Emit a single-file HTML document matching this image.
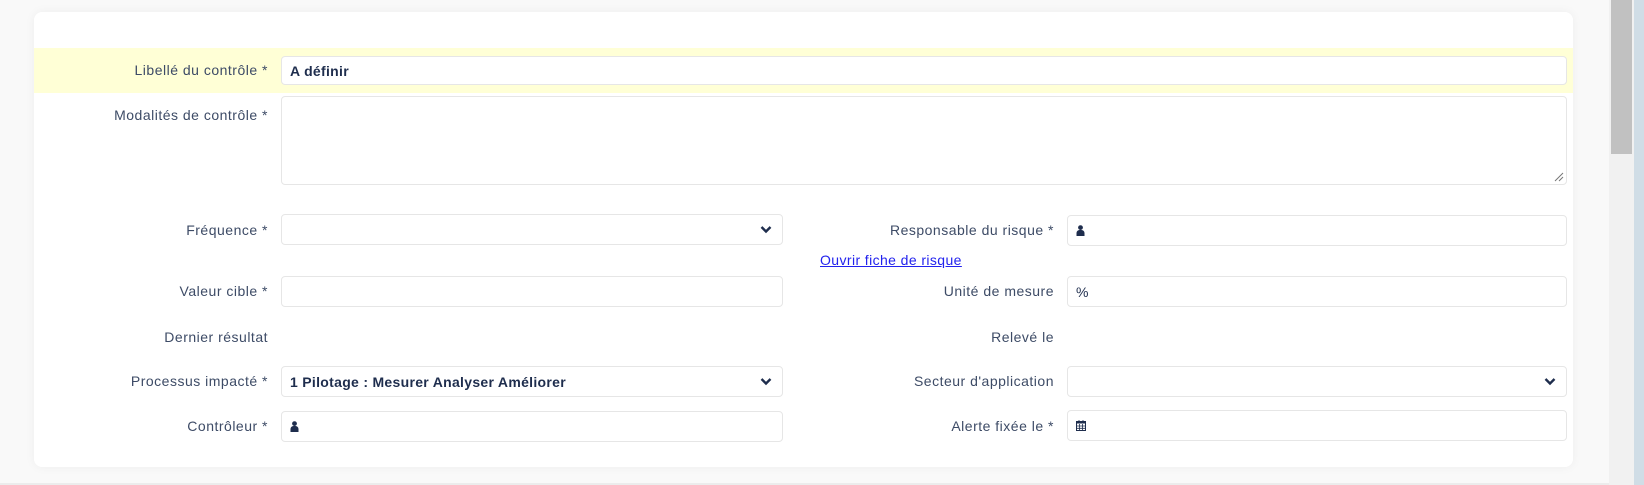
<!DOCTYPE html>
<html><head><meta charset="utf-8"><style>
*{box-sizing:border-box;margin:0;padding:0}
body{width:1644px;height:485px;background:#f9f9f9;font-family:"Liberation Sans",sans-serif;position:relative;overflow:hidden;color:#34435e}
.card{position:absolute;left:34px;top:12px;width:1539px;height:455px;background:#fff;border-radius:8px;box-shadow:0 0 10px rgba(0,0,0,.05)}
.band{position:absolute;left:34px;top:48px;width:1539px;height:45px;background:#ffffd6}
.lab{position:absolute;font-size:14px;text-align:right;color:#3d4b66;letter-spacing:0.5px;white-space:nowrap}
.in{position:absolute;background:#fff;border:1px solid #e6e6e6;border-radius:4px;font-size:14px;font-weight:bold;color:#1e2d4d;padding-left:8px;display:flex;align-items:center;letter-spacing:0.3px;white-space:nowrap}
.chev{position:absolute;right:10px;top:50%;margin-top:-5px}
.sb{position:absolute;left:1609px;top:0;width:25px;height:485px;background:#f1f1f1}
.th{position:absolute;left:1611px;top:0;width:21px;height:154px;background:#c1c1c1}
.blue{position:absolute;left:1634px;top:0;width:10px;height:485px;background:#d0dde6}
</style></head><body>
<div style="position:absolute;left:0;top:483px;width:1609px;height:2px;background:#ececec"></div>
<div class="card"></div>
<div class="band"></div>
<div class="lab" style="right:1376px;top:62px">Libellé du contrôle *</div>
<div class="in" style="left:281px;top:56px;width:1286px;height:29px">A définir</div>
<div class="lab" style="right:1376px;top:107px">Modalités de contrôle *</div>
<div class="in" style="left:281px;top:96px;width:1286px;height:89px">
<svg style="position:absolute;right:2px;bottom:2px" width="10" height="10"><path d="M1 9L9 1M5 9L9 5" stroke="#777" stroke-width="1"/></svg></div>

<div class="lab" style="right:1376px;top:222px">Fréquence *</div>
<div class="in" style="left:281px;top:214px;width:502px;height:31px"><svg class="chev" width="12" height="9"><path d="M1.5 2L6 6.5L10.5 2" stroke="#1e2d4d" stroke-width="2.4" fill="none"/></svg></div>
<div class="lab" style="right:590px;top:222px">Responsable du risque *</div>
<div class="in" style="left:1067px;top:215px;width:500px;height:31px"><svg width="9" height="11" viewBox="0 0 9 11"><circle cx="4.5" cy="2.6" r="2.4" fill="#1e2d4d"/><path d="M0.5 11V8a3 3 0 0 1 3-3h2a3 3 0 0 1 3 3v3z" fill="#1e2d4d"/></svg></div>
<a style="position:absolute;left:820px;top:252px;font-size:14px;letter-spacing:0.4px;text-decoration:underline;color:#2222ee;white-space:nowrap">Ouvrir fiche de risque</a>

<div class="lab" style="right:1376px;top:283px">Valeur cible *</div>
<div class="in" style="left:281px;top:276px;width:502px;height:31px"></div>
<div class="lab" style="right:590px;top:283px">Unité de mesure</div>
<div class="in" style="left:1067px;top:276px;width:500px;height:31px;font-weight:normal">%</div>

<div class="lab" style="right:1376px;top:329px">Dernier résultat</div>
<div class="lab" style="right:590px;top:329px">Relevé le</div>

<div class="lab" style="right:1376px;top:373px">Processus impacté *</div>
<div class="in" style="left:281px;top:366px;width:502px;height:31px">1 Pilotage : Mesurer Analyser Améliorer<svg class="chev" width="12" height="9"><path d="M1.5 2L6 6.5L10.5 2" stroke="#1e2d4d" stroke-width="2.4" fill="none"/></svg></div>
<div class="lab" style="right:590px;top:373px">Secteur d'application</div>
<div class="in" style="left:1067px;top:366px;width:500px;height:31px"><svg class="chev" width="12" height="9"><path d="M1.5 2L6 6.5L10.5 2" stroke="#1e2d4d" stroke-width="2.4" fill="none"/></svg></div>

<div class="lab" style="right:1376px;top:418px">Contrôleur *</div>
<div class="in" style="left:281px;top:411px;width:502px;height:31px"><svg width="9" height="11" viewBox="0 0 9 11"><circle cx="4.5" cy="2.6" r="2.4" fill="#1e2d4d"/><path d="M0.5 11V8a3 3 0 0 1 3-3h2a3 3 0 0 1 3 3v3z" fill="#1e2d4d"/></svg></div>
<div class="lab" style="right:590px;top:418px">Alerte fixée le *</div>
<div class="in" style="left:1067px;top:410px;width:500px;height:31px"><svg width="10" height="11" viewBox="0 0 10 11"><rect x="0.5" y="1.5" width="9" height="9" fill="none" stroke="#1e2d4d"/><rect x="0.5" y="1.5" width="9" height="2" fill="#1e2d4d"/><path d="M3 0v2M7 0v2M0.5 6h9M0.5 8.3h9M3.5 4v6M6.5 4v6" stroke="#1e2d4d" stroke-width="0.8"/></svg></div>

<div class="sb"></div><div class="th"></div><div class="blue"></div>
</body></html>
